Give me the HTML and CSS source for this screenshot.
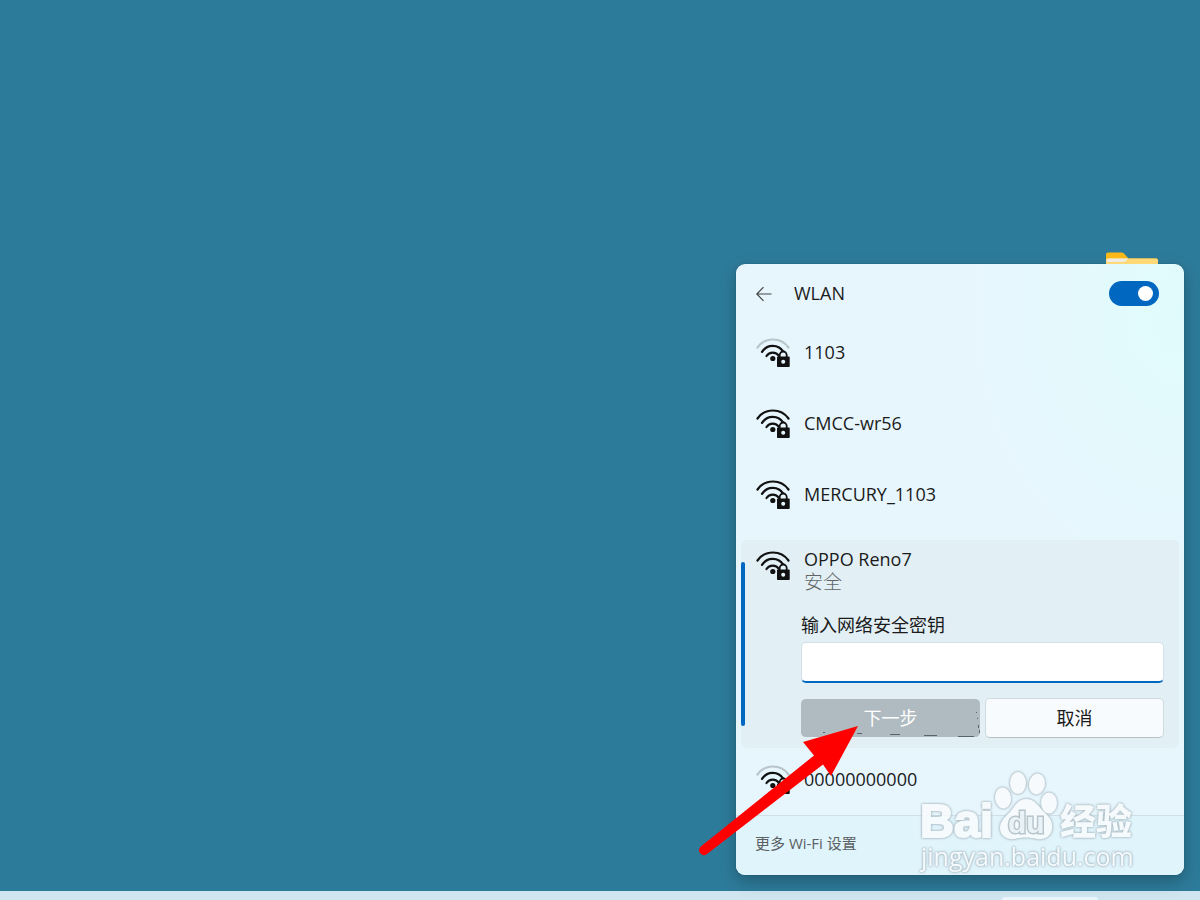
FILE: index.html
```html
<!DOCTYPE html>
<html lang="zh-CN">
<head>
    <meta charset="UTF-8">
    <meta name="viewport" content="width=device-width, initial-scale=1.0">
    <title>WLAN</title>
    <link rel="stylesheet" href="styles.css">
</head>
<body>
    <!-- shared wifi icon parts -->
    <svg class="defs" aria-hidden="true">
        <symbol id="wifi" viewBox="0 0 36 32">
            <path class="outer" d="M1.5 9.5A19 19 0 0 1 32.5 9.5"/>
            <path d="M6 13.900A12.500 12.500 0 0 1 27.500 13.900"/>
            <path d="M10.500 18A7.500 7.500 0 0 1 23 18"/>
            <circle class="fill" cx="16.800" cy="20.500" r="2.600"/>
            <path class="halo" d="M23.600 19v-2a3.500 3.500 0 0 1 7 0v2z"/>
            <path class="fill" d="M21.700 18.500h11.300a.7.7 0 0 1 .7.7v9.100a.7.7 0 0 1-.7.7H21.700a.7.7 0 0 1-.7-.7v-9.100a.7.7 0 0 1 .7-.7z"/>
            <path class="shackle" d="M23.700 19v-2a3.500 3.500 0 0 1 7 0v2"/>
            <circle class="hole" cx="27.200" cy="23.800" r="2"/>
        </symbol>
    </svg>

    <main class="desktop">
        <section class="panel">
            <svg class="folder" viewBox="0 0 54 12" aria-hidden="true">
                <path fill="#fcb816" d="M1 13V2.500Q1 .5 3 .5h13.500q1.500 0 2.500 1l4.500 5H51q2 0 2 2V13z"/>
                <path fill="#ffd978" d="M1 13V8q0-1.500 1.500-1.500H51q2 0 2 2V13z"/>
                <path fill="#f0ebe0" d="M2 10V8q0-1.500 1.500-1.500H23q-2 3.500-5 3.500z"/>
            </svg>

            <header class="panel-header">
                <button class="back" type="button" aria-label="返回">
                    <svg viewBox="0 0 16 16"><path d="M15.500 8H1M7.500 1.200L.8 8l6.700 6.800"/></svg>
                </button>
                <h1>WLAN</h1>
                <input class="toggle" type="checkbox" aria-label="WLAN" checked>
            </header>

            <ul class="networks">
                <li class="network weak">
                    <svg class="wifi"><use href="#wifi"/></svg>
                    <span>1103</span>
                </li>
                <li class="network">
                    <svg class="wifi"><use href="#wifi"/></svg>
                    <span>CMCC-wr56</span>
                </li>
                <li class="network">
                    <svg class="wifi"><use href="#wifi"/></svg>
                    <span>MERCURY_1103</span>
                </li>
                <li class="selected">
                    <div class="selected-head">
                        <svg class="wifi"><use href="#wifi"/></svg>
                        <div>
                            <div class="name">OPPO Reno7</div>
                            <div class="status">安全</div>
                        </div>
                    </div>
                    <form class="key-form">
                        <label for="key">输入网络安全密钥</label>
                        <input id="key" class="key-input" type="password">
                        <div class="actions">
                            <button class="next" type="button" disabled>下一步</button>
                            <button class="cancel" type="button">取消</button>
                        </div>
                    </form>
                </li>
                <li class="network weak last">
                    <svg class="wifi"><use href="#wifi"/></svg>
                    <span>00000000000</span>
                </li>
            </ul>

            <footer class="panel-footer">
                <a href="#">更多 Wi-Fi 设置</a>
            </footer>

            <svg class="watermark" viewBox="0 0 220 110" aria-hidden="true">
                <text class="brand" x="0" y="69">Bai</text>
                <ellipse cx="83" cy="30" rx="8" ry="10.500" transform="rotate(-8 83 30)"/>
                <ellipse cx="98" cy="15" rx="8" ry="11"/>
                <ellipse cx="117" cy="16" rx="8" ry="10.500" transform="rotate(10 117 16)"/>
                <ellipse cx="129" cy="35" rx="8" ry="10.500"/>
                <path d="M106 31c9 0 13 8 18 13 7 6 9 11 8 17-1 8-8 11-15 10-7-2-16-2-22 0-8 1-15-3-15-11 0-7 5-11 10-16 5-6 8-13 16-13z"/>
                <text class="du" x="88" y="65">du</text>
                <text class="cn" x="140" y="67">经验</text>
                <text class="url" x="1" y="98">jingyan.baidu.com</text>
            </svg>

            <svg class="arrow" viewBox="0 0 290 160" aria-hidden="true">
                <path class="specks" d="M123 32.500h2M157 33.500h5M190 34.500h10M224 35.500h13M258 36.500h16M276 12.500h1M277 18.500h1M278.500 25v3M279.500 30v3"/>
                <path fill="#f00" d="M158 26L131 76l-8-11.500L7 154A4.900 4.900 0 0 1 .5 146.700L114 55.500 103 42z"/>
            </svg>
        </section>
    </main>

    <div class="taskbar"><div class="search"></div></div>
</body>
</html>
```
FILE: styles.css
```css
* {
    box-sizing: border-box;
}
body {
    margin: 0;
    min-height: 100vh;
    display: flex;
    flex-direction: column;
    background: #2d7b9a;
    color: #1b1b1b;
    font-family: "Open Sans", "Noto Sans CJK SC", sans-serif;
    font-size: 18px;
    line-height: 24px;
    overflow: hidden;
}
button, input {
    font: inherit;
}
.defs {
    position: absolute;
    width: 0;
    height: 0;
}
.desktop {
    flex: 1;
    display: flex;
    justify-content: flex-end;
    align-items: flex-end;
    padding: 16px;
}
.panel {
    position: relative;
    width: 448px;
    max-width: 100%;
    border-radius: 9px;
    background: radial-gradient(ellipse at 100% 8%, #e0fbfc 0%, #e2fafc 10%, #e7f6fd 34%);
    box-shadow: 0 6px 16px rgba(0, 0, 0, 0.25), 0 0 1px rgba(0, 0, 0, 0.5);
}
.folder {
    position: absolute;
    right: 25px;
    bottom: 100%;
    width: 54px;
    height: 12px;
}

/* header */
.panel-header {
    display: flex;
    align-items: center;
    height: 53px;
    padding: 6px 25px 0 20px;
}
.back {
    display: flex;
    width: 38px;
    padding: 0;
    border: 0;
    background: none;
}
.back svg {
    width: 16px;
    height: 16px;
    fill: none;
    stroke: #444;
    stroke-width: 1.2;
}
h1 {
    flex: 1;
    margin: 0 0 2px;
    font-size: 18px;
    font-weight: 400;
}
.toggle {
    appearance: none;
    width: 50px;
    height: 25px;
    margin: 0;
    padding: 5px 6px;
    border-radius: 13px;
    background: #0067c0;
    display: flex;
    justify-content: flex-end;
}
.toggle::before {
    content: "";
    width: 15px;
    height: 15px;
    border-radius: 50%;
    background: #fff;
}

/* network list */
.networks {
    margin: 0;
    padding: 0;
    list-style: none;
}
.network {
    display: flex;
    align-items: center;
    gap: 12px;
    height: 71px;
    padding-left: 20px;
}
.network span {
    margin-bottom: 2px;
}
.network.last {
    height: 67px;
    padding-bottom: 4px;
}
.wifi {
    flex: none;
    width: 36px;
    height: 32px;
    margin-top: 2px;
    fill: none;
    stroke: #111;
    stroke-width: 2.2;
    stroke-linecap: round;
}
.weak {
    --outer: #b9c5ca;
}
.outer {
    stroke: var(--outer, #111);
}
.fill {
    fill: #111;
    stroke: none;
}
.halo {
    fill: #e7f6fd;
    stroke: none;
}
.shackle {
    stroke-width: 1.8;
}
.hole {
    fill: #e7f6fd;
    stroke: none;
}
.selected {
    position: relative;
    margin: 10px 5px 0;
    padding: 8px 15px 10px;
    height: 208px;
    border-radius: 5px;
    background: #e2eff5;
}
.selected::before {
    content: "";
    position: absolute;
    left: 0;
    top: 22px;
    bottom: 22px;
    width: 4px;
    border-radius: 2px;
    background: #0067c0;
}
.selected-head {
    display: flex;
    gap: 12px;
}
.selected-head .wifi {
    margin-top: 3px;
}
.name, .status {
    line-height: 23px;
}
.status {
    color: #606466;
    font-size: 19px;
    font-weight: 300;
}
.key-form {
    margin: 18px 0 0 45px;
}
.key-form label {
    display: block;
    line-height: 26px;
    margin-bottom: 4px;
}
.key-input {
    display: block;
    width: 100%;
    height: 41px;
    padding: 0 12px;
    border: 1px solid #d3e0e6;
    border-bottom: 2px solid #0067c0;
    border-radius: 5px;
    background: #fff;
    outline: none;
}
.actions {
    display: grid;
    grid-template-columns: 1fr 1fr;
    gap: 5px;
    margin-top: 15px;
}
.actions button {
    height: 40px;
    padding: 0;
    border: 1px solid #cfdbe0;
    border-bottom-color: #b5c0c5;
    border-radius: 5px;
    background: #f8fbfe;
    color: #1b1b1b;
}
.actions .next {
    border-width: 1px 0;
    border-color: transparent;
    background: #b0bbc1;
    background-clip: padding-box;
    color: #fff;
}

/* footer */
.panel-footer {
    height: 60px;
    padding: 14px 19px;
    border-top: 1px solid #cfe0e7;
    border-radius: 0 0 9px 9px;
    background: #e0f4fc;
}
.panel-footer a {
    color: #5a6063;
    font-size: 15px;
    text-decoration: none;
}

/* overlays */
.watermark {
    position: absolute;
    right: 44px;
    bottom: -3px;
    width: 220px;
    height: 110px;
    fill: #f8fbfe;
    opacity: 0.9;
    filter: drop-shadow(0 0 1px #9fb0b8) drop-shadow(0 0 1px #b5c4cb);
}
.watermark text {
    font-family: "Open Sans", "Noto Sans CJK SC", sans-serif;
}
.watermark .brand {
    font-family: "Liberation Sans", sans-serif;
    font-size: 47px;
    font-weight: 700;
    stroke: #f8fbfe;
    stroke-width: 2;
}
.watermark .du {
    font-family: "Liberation Sans", sans-serif;
    font-size: 30px;
    font-weight: 700;
    fill: #ebf3f7;
    stroke: #b3c1c7;
    stroke-width: 3;
    paint-order: stroke;
}
.watermark .cn {
    font-size: 36px;
    font-weight: 900;
}
.watermark .url {
    font-size: 25px;
}
.arrow {
    position: absolute;
    right: 194px;
    bottom: 15px;
    width: 290px;
    height: 160px;
    overflow: visible;
    pointer-events: none;
}
.specks {
    stroke: #59636a;
    stroke-width: 1;
}

/* taskbar */
.taskbar {
    display: flex;
    justify-content: flex-end;
    height: 9px;
    padding: 6px 102px 0 0;
    background: #cfe6f1;
}
.search {
    width: 96px;
    border-radius: 4px 4px 0 0;
    background: #eaf6fb;
}
```
